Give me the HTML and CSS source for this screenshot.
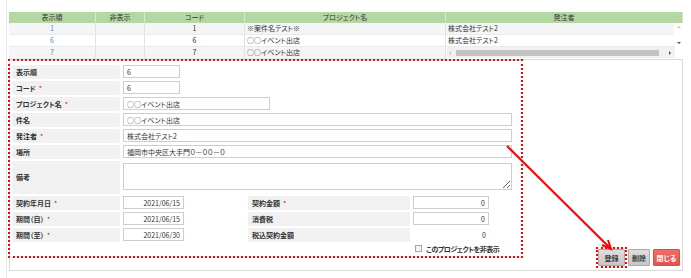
FILE: index.html
```html
<!DOCTYPE html>
<html lang="ja">
<head>
    <meta charset="UTF-8">
    <title>プロジェクト</title>
    <link rel="stylesheet" href="styles.css">
</head>
<body>
    <div class="page">
        <div class="list">
            <div class="grid">
                <div class="th">表示順</div>
                <div class="th">非表示</div>
                <div class="th">コード</div>
                <div class="th">プロジェクト名</div>
                <div class="th">発注者</div>

                <div class="td alt center link">1</div>
                <div class="td alt"></div>
                <div class="td alt center">1</div>
                <div class="td alt">※案件名テスト※</div>
                <div class="td alt">株式会社テスト2</div>

                <div class="td center link">6</div>
                <div class="td"></div>
                <div class="td center">6</div>
                <div class="td">○○イベント出店</div>
                <div class="td">株式会社テスト2</div>

                <div class="td alt center link">7</div>
                <div class="td alt"></div>
                <div class="td alt center">7</div>
                <div class="td alt">○○イベント出店</div>
                <div class="td last">
                    <div class="hscroll">
                        <span class="tri-l"></span>
                        <span class="thumb"></span>
                        <span class="tri-r"></span>
                    </div>
                </div>
            </div>
            <!-- vertical scrollbar over the list -->
            <div class="vscroll">
                <span class="tri-u"></span>
                <span class="tri-d"></span>
            </div>
        </div>

        <div class="panel">
            <div class="form">
                <div class="row">
                    <div class="lbl">表示順</div>
                    <input class="w-s" type="text" value="6">
                </div>
                <div class="row">
                    <div class="lbl">コード<span class="req">*</span></div>
                    <input class="w-s" type="text" value="6">
                </div>
                <div class="row">
                    <div class="lbl">プロジェクト名<span class="req">*</span></div>
                    <input class="w-m" type="text" value="○○イベント出店">
                </div>
                <div class="row">
                    <div class="lbl">件名</div>
                    <input class="w-l" type="text" value="○○イベント出店">
                </div>
                <div class="row">
                    <div class="lbl">発注者<span class="req">*</span></div>
                    <input class="w-l" type="text" value="株式会社テスト2">
                </div>
                <div class="row">
                    <div class="lbl">場所</div>
                    <input class="w-l" type="text" value="福岡市中央区大手門０－００－０">
                </div>
                <div class="row tall">
                    <div class="lbl">備考</div>
                    <textarea class="w-l"></textarea>
                </div>
                <div class="row">
                    <div class="lbl">契約年月日<span class="req">*</span></div>
                    <input class="w-date" type="text" value="2021/06/15">
                    <div class="lbl wide">契約金額<span class="req">*</span></div>
                    <input class="w-amt" type="text" value="0">
                </div>
                <div class="row">
                    <div class="lbl">期間（自）<span class="req">*</span></div>
                    <input class="w-date" type="text" value="2021/06/15">
                    <div class="lbl wide">消費税</div>
                    <input class="w-amt" type="text" value="0">
                </div>
                <div class="row">
                    <div class="lbl">期間（至）<span class="req">*</span></div>
                    <input class="w-date" type="text" value="2021/06/30">
                    <div class="lbl wide">税込契約金額</div>
                    <div class="amt">0</div>
                </div>
                <label class="hide-row">
                    <input type="checkbox">
                    <span>このプロジェクトを非表示</span>
                </label>
            </div>

            <div class="buttons">
                <button class="btn marked">登録</button>
                <button class="btn narrow">削除</button>
                <button class="btn red">閉じる</button>
            </div>

            <div class="mark-form"></div>
        </div>
    </div>

    <svg class="arrow" width="691" height="278" viewBox="0 0 691 278">
        <line x1="507" y1="146" x2="610" y2="248" stroke="#ff0000" stroke-width="2"/>
        <polyline points="602,245 611,249 608,240" fill="none" stroke="#ff0000" stroke-width="2"/>
    </svg>
</body>
</html>
```

FILE: styles.css
```css
body {
    margin: 0;
    position: relative;
    width: 691px;
    height: 278px;
    overflow: hidden;
    background: #fff;
    color: #333;
    font-family: "Noto Sans CJK JP", "Noto Sans", sans-serif;
    font-size: 7px;
    font-feature-settings: "palt";
}
.page {
    margin-left: 6px;
    height: 278px;
    box-sizing: border-box;
    border-left: 1px solid #e3e9ee;
    padding: 12px 8px 0 2px;
}

/* list */
.list {
    position: relative;
}
.grid {
    display: grid;
    grid-template-columns: 87px 49px 100px 201px 237px;
}
.th {
    height: 11px;
    line-height: 11px;
    background: #b3d8a4;
    border-right: 1px solid #d3e9ca;
    text-align: center;
    box-sizing: border-box;
}
.th:last-child {
    border-right: none;
}
.td {
    height: 12px;
    line-height: 11px;
    box-sizing: border-box;
    padding-left: 2px;
    border-right: 1px solid #e2e2e2;
    border-bottom: 1px solid #ebebeb;
    white-space: nowrap;
    overflow: hidden;
}
.td:nth-child(5n) {
    border-right: none;
    padding-right: 9px;
}
.td.alt {
    background: #f5f5f5;
}
.center {
    text-align: center;
    padding-left: 0;
}
.link {
    color: #3b9ad2;
}
.td.last {
    padding: 0;
    border-bottom: none;
}
.hscroll {
    display: flex;
    align-items: center;
    height: 11px;
    margin-right: 8px;
    margin-left: 1px;
    background: #f1f1f1;
}
.thumb {
    flex: 1;
    height: 6px;
    margin: 0 10px 0 5px;
    background: #c3c3c3;
}
.tri-l, .tri-r, .tri-u, .tri-d {
    width: 0;
    height: 0;
    border: 2px solid transparent;
}
.tri-l {
    margin-left: 2px;
    border-right: 2px solid #c4c4c4;
    border-left-width: 0;
}
.tri-r {
    margin-right: 4px;
    border-left: 2px solid #505050;
    border-right-width: 0;
}
.vscroll {
    position: absolute;
    right: 0;
    top: 11px;
    width: 9px;
    height: 24px;
    background: #fff;
    display: flex;
    flex-direction: column;
    align-items: center;
    justify-content: space-between;
    padding: 3px 0 3px 1px;
    box-sizing: border-box;
}
.tri-u {
    border-bottom: 2px solid #c4c4c4;
    border-top-width: 0;
}
.tri-d {
    border-top: 2px solid #505050;
    border-bottom-width: 0;
}

/* edit panel */
.panel {
    position: relative;
    display: flex;
    justify-content: space-between;
    align-items: flex-end;
    height: 212px;
    box-sizing: border-box;
    border: 1px solid #dcdcdc;
    padding: 5px 2px 4px 2px;
}
.form {
    align-self: flex-start;
    width: 500px;
}
.row {
    display: flex;
    gap: 3px;
    height: 14px;
    margin-bottom: 2px;
}
.row.tall {
    height: 33px;
}
.lbl {
    flex: none;
    width: 108px;
    box-sizing: border-box;
    padding-left: 4px;
    background: #f1f1f1;
    font-weight: bold;
    line-height: 14px;
}
.row.tall .lbl {
    line-height: 33px;
}
.lbl.wide {
    width: 162px;
    margin-left: 61px;
}
.req {
    color: #e60012;
    margin-left: 3px;
    font-weight: normal;
}
input[type="text"], textarea {
    flex: none;
    height: 13px;
    margin: 0;
    padding: 0 3px;
    box-sizing: border-box;
    border: 1px solid #cdcdcd;
    border-radius: 0;
    font: inherit;
    color: #333;
    background: #fff;
    outline: none;
}
textarea {
    height: 27px;
    margin-top: 2px;
}
.w-s {
    width: 57px;
}
.w-m {
    width: 147px;
}
.w-l {
    width: 389px;
}
.w-date {
    width: 61px;
    text-align: right;
}
.w-amt {
    width: 76px;
    text-align: right;
}
.amt {
    width: 76px;
    box-sizing: border-box;
    padding-right: 3px;
    text-align: right;
    line-height: 14px;
}
.hide-row {
    display: flex;
    align-items: center;
    gap: 4px;
    margin-left: 403px;
    height: 9px;
    font-weight: bold;
    letter-spacing: -0.5px;
}
.hide-row input {
    appearance: none;
    width: 7px;
    height: 7px;
    margin: 0;
    border: 1px solid #a8a8a8;
    background: #f4f4f4;
}

.buttons {
    display: flex;
    gap: 3px;
}
.btn {
    position: relative;
    width: 27px;
    height: 17px;
    padding: 0;
    border: 1px solid #a9a9a9;
    border-radius: 1px;
    background: linear-gradient(#dedede, #c6c6c6);
    color: #3a3a3a;
    font: inherit;
    font-weight: bold;
    cursor: pointer;
}
.btn.narrow {
    width: 22px;
}
.btn.red {
    background: linear-gradient(#ef6f6b, #e2524e);
    border-color: #d4504c;
    color: #fff;
}
.btn.marked::after {
    content: "";
    position: absolute;
    inset: -3px;
    border: 2px dotted #ff0000;
}

/* annotation overlays */
.mark-form {
    position: absolute;
    left: -2px;
    top: -1px;
    width: 515px;
    height: 199px;
    box-sizing: border-box;
    border: 2px dotted #ff0000;
    pointer-events: none;
}
.arrow {
    position: absolute;
    left: 0;
    top: 0;
    pointer-events: none;
}
```
